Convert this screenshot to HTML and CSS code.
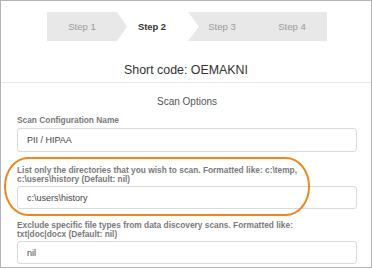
FILE: index.html
```html
<!DOCTYPE html>
<html lang="en">

<head>
    <meta charset="UTF-8">
    <meta name="viewport" content="width=device-width, initial-scale=1.0">
    <title>Scan Options</title>
    <link rel="stylesheet" href="styles.css">
</head>

<body>
    <div class="frame">
        <div class="steps">
            <div class="step">Step 1</div>
            <div class="step active">Step 2</div>
            <div class="step">Step 3</div>
            <div class="step">Step 4</div>
        </div>
        <h2 class="short-code">Short code: OEMAKNI</h2>
        <div class="divider"></div>
        <form class="options">
            <h3 class="options-title">Scan Options</h3>
            <label class="field-label">Scan Configuration Name</label>
            <input class="field-input" type="text" value="PII / HIPAA">
            <label class="field-label two-line">List only the directories that you wish to scan. Formatted like: c:\temp, c:\users\history (Default: nil)</label>
            <input class="field-input" type="text" value="c:\users\history">
            <label class="field-label two-line last">Exclude specific file types from data discovery scans. Formatted like: txt|doc|docx (Default: nil)</label>
            <input class="field-input" type="text" value="nil">
        </form>
        <!-- callout drawn over the directories field -->
        <div class="highlight"></div>
    </div>
</body>

</html>
```

FILE: styles.css
```css
body {
    margin: 0;
    font-family: "Liberation Sans", Arial, sans-serif;
    background-color: #ffffff;
}
.frame {
    position: relative;
    width: 372px;
    height: 268px;
    box-sizing: border-box;
    border: 1px solid #b4b4b4;
    overflow: hidden;
}
.steps {
    display: flex;
    width: 280px;
    height: 29px;
    margin: 11px 0 0 46px;
    background-color: #e8e8e8;
}
.step {
    width: 70px;
    flex-shrink: 0;
    display: flex;
    align-items: center;
    justify-content: center;
    font-size: 9.6px;
    color: #9a9a9a;
}
.step.active {
    width: 82px;
    padding-right: 12px;
    box-sizing: border-box;
    margin-right: -12px;
    background-color: #ffffff;
    color: #333333;
    font-weight: bold;
    font-size: 9.4px;
    clip-path: polygon(0 0, 71px 0, 82px 50%, 71px 100%, 0 100%, 10px 50%);
}
.short-code {
    margin: 21px 0 0 0;
    line-height: 16px;
    font-size: 12.4px;
    font-weight: normal;
    text-align: center;
    color: #333333;
}
.divider {
    height: 1px;
    margin-top: 4px;
    background-color: #e6e6e6;
}
.options {
    display: flex;
    flex-direction: column;
    padding: 0 14px 0 16px;
}
.options-title {
    margin: 13px 0 0 0;
    line-height: 12px;
    font-size: 10px;
    font-weight: normal;
    text-align: center;
    color: #555555;
}
.field-label {
    max-width: 284px;
    margin-top: 7px;
    line-height: 10px;
    font-size: 8.35px;
    font-weight: bold;
    color: #7a7a7a;
}
.field-label.two-line {
    margin-top: 14px;
    line-height: 8.5px;
}
.field-label.last {
    margin-top: 12px;
}
.field-input {
    margin-top: 3px;
    height: 23px;
    box-sizing: border-box;
    padding: 0 9px;
    border: 1px solid #dadada;
    border-radius: 3px;
    font-family: "Liberation Sans", Arial, sans-serif;
    font-size: 9px;
    color: #444444;
}
.field-input:first-of-type {
    height: 24px;
}
.highlight {
    position: absolute;
    left: 3px;
    top: 156px;
    width: 306px;
    height: 59px;
    box-sizing: border-box;
    border: 2px solid #f0861f;
    border-radius: 24px / 29px;
}
```
